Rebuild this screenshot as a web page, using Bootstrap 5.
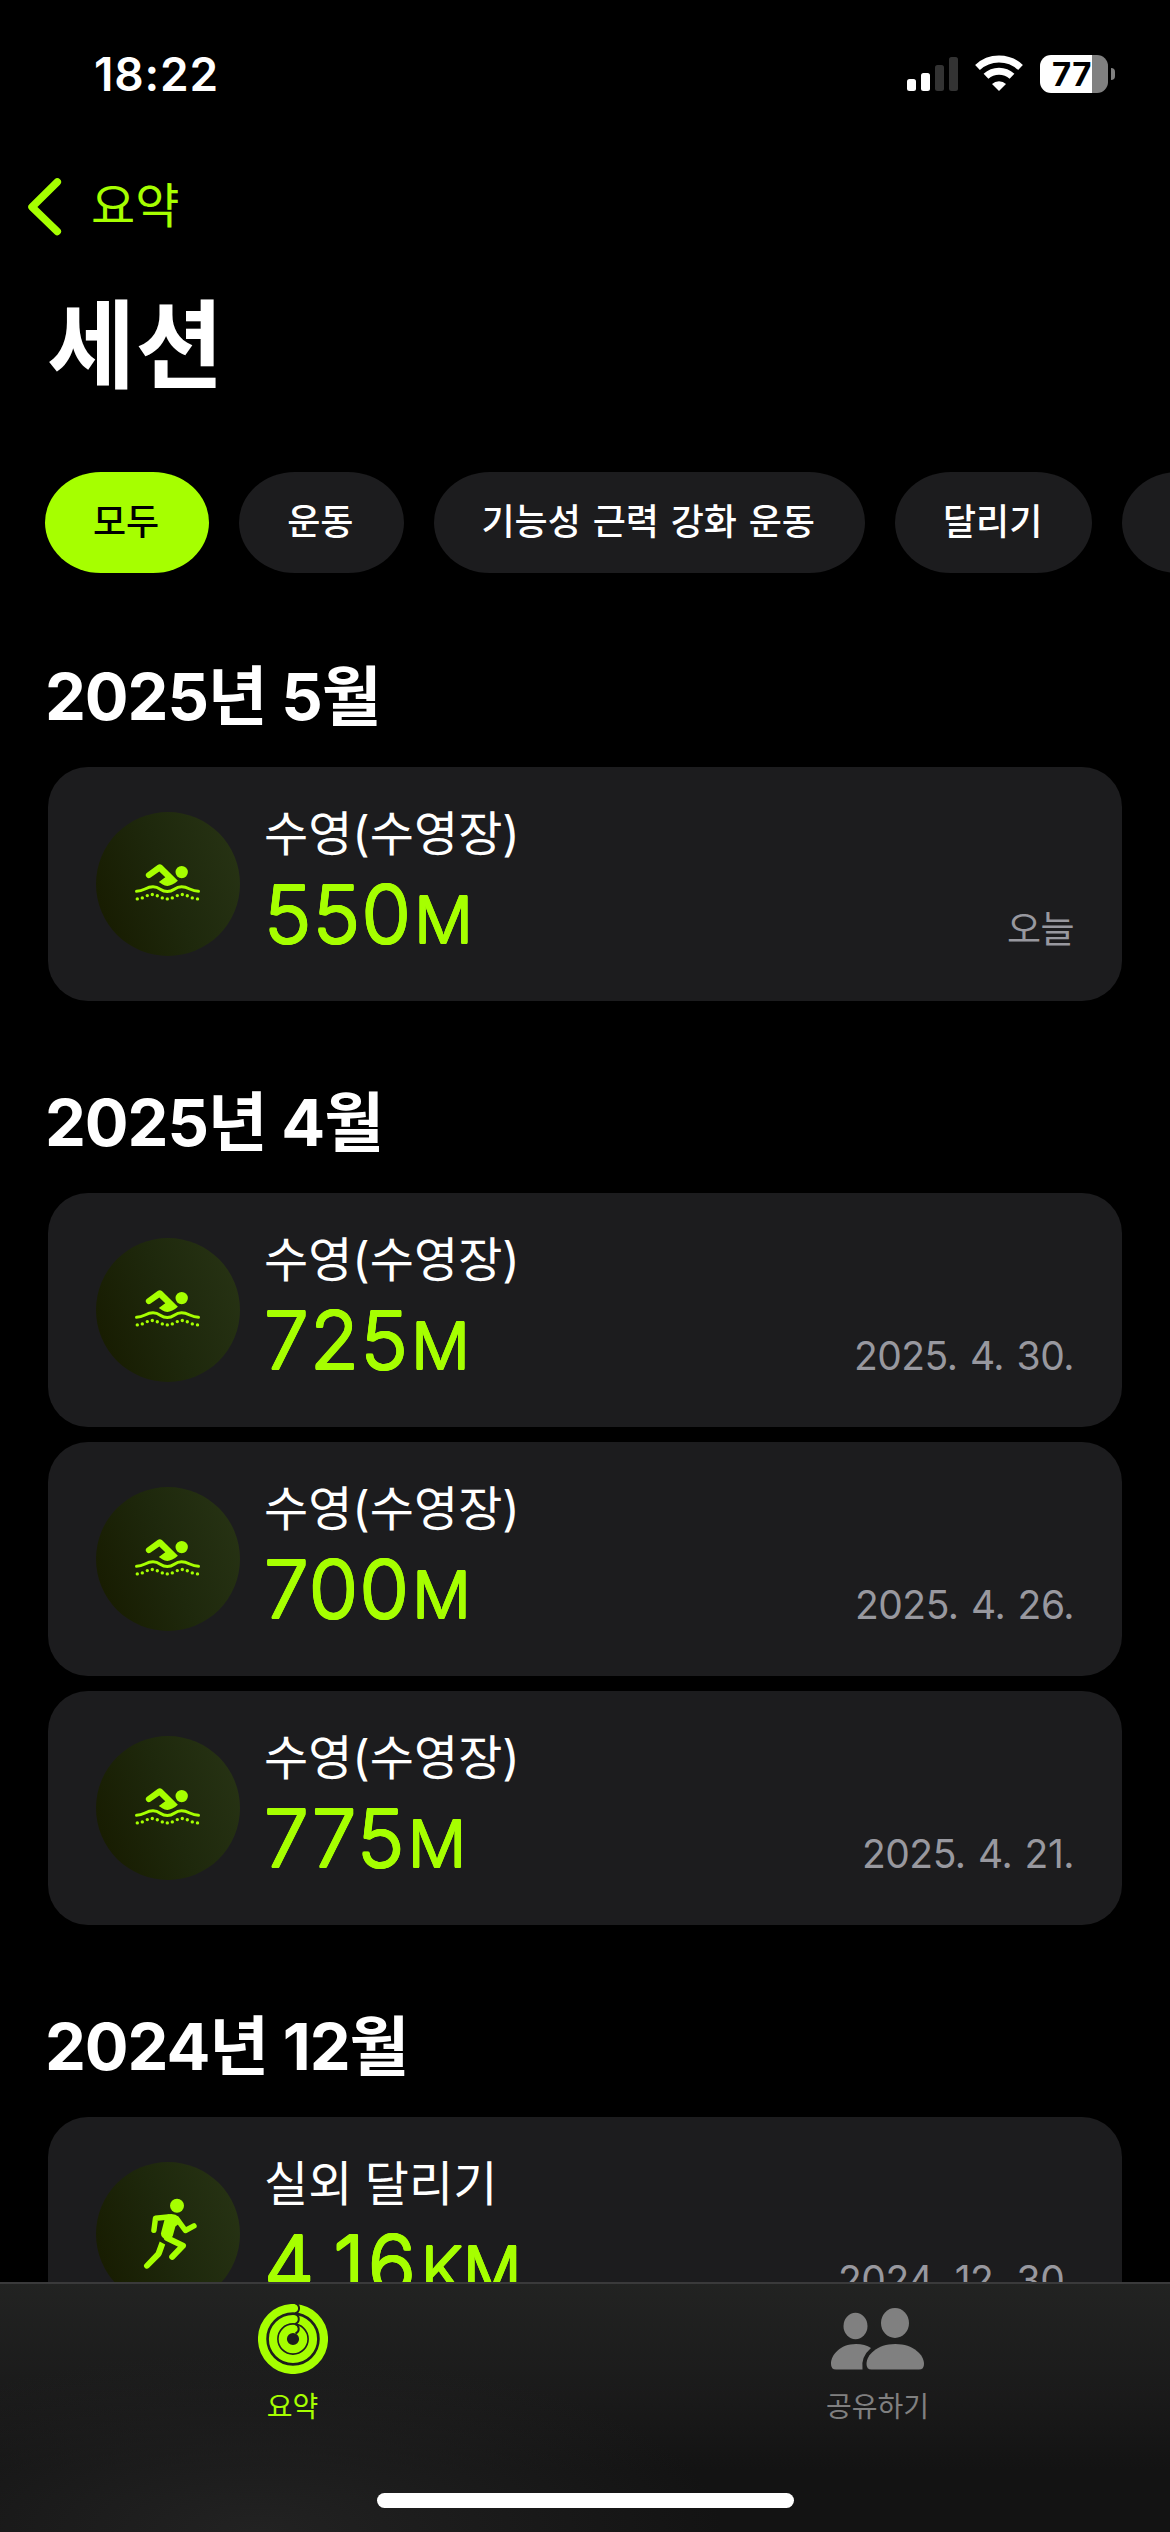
<!doctype html>
<html lang="ko" data-bs-theme="dark">
<head>
<meta charset="utf-8">
<meta name="viewport" content="width=device-width, initial-scale=1">
<title>세션</title>
<link href="https://cdn.jsdelivr.net/npm/bootstrap@5.3.0/dist/css/bootstrap.min.css" rel="stylesheet">
<style>
  :root { --lime: #a6ff00; --tile: #1c1c1e; }
  body { background: #000; color: #fff; font-family: Inter, "Noto Sans CJK KR", sans-serif; }
  .phone { width: 1170px; height: 2532px; }
  .screen { min-height: 0; }
  .text-lime, .tab.text-lime { color: var(--lime); }
  .status { height: 148px; padding: 0 55px 0 94px; }
  .clock { font-size: 46px; font-weight: 600; letter-spacing: .8px; }
  .status-icons { gap: 17px; }
  .battery { width: 75px; height: 38px; }
  .battery-body { width: 68px; height: 38px; border-radius: 11px; background: linear-gradient(90deg, #fff 52px, #808080 52px); }
  .battery-level { color: #000; font-size: 33px; font-weight: 700; line-height: 38px; padding-left: 12px; letter-spacing: .3px; }
  .battery-tip { width: 4px; height: 12px; margin-left: 3px; border-radius: 0 4px 4px 0; background: #808080; }
  .back { height: 60px; margin-top: 28px; padding-left: 26px; gap: 27px; font-size: 48px; line-height: 60px; }
  .page-title { font-size: 96px; font-weight: 700; line-height: 100px; margin: 59px 0 77px 47px; }
  .chips { gap: 30px; padding-left: 45px; }
  .chip { height: 101px; min-width: 164px; padding: 0 50px 0 48px; border: 0; border-radius: 56px / 50.5px; background: var(--tile); color: #fff; font-size: 36px; font-weight: 500; line-height: 101px; word-spacing: 2.2px; white-space: nowrap; flex: none; }
  .chip.on { background: var(--lime); color: #000; }
  .sessions { padding: 2px 48px 0; }
  .month { font-size: 65px; font-weight: 700; line-height: 60px; letter-spacing: -1.1px; word-spacing: .5px; margin: 92px 0 40px -3px; }
  .session-list { gap: 15px; }
  .session { height: 234px; padding: 45px 48px; border: 0; border-radius: 40px; background: var(--tile); color: #fff; }
  .disc { width: 144px; height: 144px; background: linear-gradient(70deg, #171b00 5%, #1e280c 50%, #273314 95%); flex: none; }
  .info { margin-left: 24px; }
  .kind { font-size: 48px; line-height: 44px; word-spacing: -1px; }
  .distance { font-size: 80px; font-weight: 300; line-height: 78px; letter-spacing: 1.3px; margin: 19px 0 0 0; color: var(--lime);
    text-shadow: 1px 0, -1px 0, 0 1px, 0 -1px, .7px .7px, -.7px .7px, .7px -.7px, -.7px -.7px; }
  .distance.run { letter-spacing: 3px; }
  .unit { font-size: 65px; line-height: 1; margin-left: 2px; letter-spacing: 0; }
  .day { font-size: 39px; line-height: 40px; letter-spacing: -.5px; word-spacing: 2px; color: #98989f; margin-bottom: 6px; }
  .day.today { font-size: 37px; }
  .tabs { height: 250px; border-top: 2px solid #3a3a3b;
    background: radial-gradient(620px 240px at 22% 100%, rgba(35,35,35,.95), rgba(35,35,35,0) 75%), linear-gradient(180deg, #222322, #1a1a1a 45%, #131313 75%); }
  .tab { padding-top: 20px; color: #808080; font-size: 28px; line-height: 30px; text-decoration: none; }
  .tab svg { margin-bottom: 18px; }
  .home-bar { width: 417px; height: 15px; margin-bottom: 24px; }
</style>
</head>
<body>
<svg class="d-none" aria-hidden="true">
  <symbol id="swim" viewBox="0 0 144 144"><g transform="translate(39 51.3)" fill="currentColor">
    <circle cx="46.7" cy="8.8" r="6.2"/>
    <path d="M22.6 1.6Q25 0 27.2 1.9L42.9 17.4Q40 20 37.3 21.3Q34.500 22.700 32.300 22.700Q29.500 22.500 27.700 21.300L23.800 18.800L30.300 14L24.300 8.300L15.700 14.300A3.100 3.100 0 0 1 11.700 9.600Z"/>
    <path d="M1.500 28C9.500 28 10.500 23.500 18 23.500S25 28.300 32.300 28.300S39 23.500 46.500 23.500S55.500 28 63.500 28" fill="none" stroke="currentColor" stroke-width="3" stroke-linecap="round"/>
    <path d="M2.300 35.600h0M7.300 34.600h0M12.300 32.300h0M17.300 31.200h0M22.300 32.500h0M27.300 34.600h0M32.300 35.600h0M37.300 34.600h0M42.300 32.300h0M47.300 31.200h0M52.300 32.500h0M57.300 34.600h0M62.500 35.600h0" fill="none" stroke="currentColor" stroke-width="3.400" stroke-linecap="round"/>
  </g></symbol>
  <symbol id="run" viewBox="0 0 144 144"><g fill="none" stroke="currentColor" stroke-width="5.400" stroke-linecap="round" stroke-linejoin="round">
    <circle cx="81" cy="43.700" r="7" fill="currentColor" stroke="none"/>
    <path d="M57.900 68.300L59.500 56.200L72 55"/>
    <path d="M81 57L89.400 68.500L98 63.900"/>
    <path d="M68.700 57L72 52.300Q79 51 82.500 54.700L85 60L79.400 64.500L76.700 74.300L72 78.500Q65 76 64.900 71.500Z" fill="currentColor" stroke="none"/>
    <path d="M71 76L87 83.700L76.200 94.800" stroke-width="6"/>
    <path d="M63.700 79.500L69.200 82.500L66 91.500Q65.500 93 64.500 94.200L53 105.700A2.800 2.800 0 0 1 48.700 102L59.800 90.300Z" fill="currentColor" stroke="none"/>
  </g></symbol>
</svg>

<div class="phone d-flex flex-column overflow-hidden">
  <main class="screen flex-grow-1 overflow-hidden">
    <header class="status d-flex justify-content-between align-items-center">
      <div class="clock">18:22</div>
      <div class="status-icons d-flex align-items-center">
        <svg width="51" height="38" viewBox="0 0 51 38"><g fill="#fff"><rect y="24" width="9" height="12" rx="2.500"/><rect x="14" y="18" width="9" height="18" rx="2.500"/></g><g fill="#333"><rect x="28" y="10" width="9" height="26" rx="2.500"/><rect x="42" y="2" width="9" height="34" rx="2.500"/></g></svg>
        <svg width="48" height="38" viewBox="0 0 48 38"><g fill="none" stroke="#fff" stroke-width="7"><path d="M2.500 12.500A31.500 31.500 0 0 1 45.500 12.500"/><path d="M11 21.300A19 19 0 0 1 37 21.300"/></g><path d="M24 36L17 29A10 10 0 0 1 31 29Z" fill="#fff"/></svg>
        <div class="battery d-flex align-items-center"><div class="battery-body"><div class="battery-level">77</div></div><div class="battery-tip"></div></div>
      </div>
    </header>

    <nav class="back d-flex align-items-center text-lime">
      <svg width="38" height="60" viewBox="0 0 38 60"><path d="M31.300 6L6 31L31.300 55.500" fill="none" stroke="currentColor" stroke-width="7.500" stroke-linecap="round" stroke-linejoin="round"/></svg>
      <span>요약</span>
    </nav>

    <h1 class="page-title">세션</h1>

    <div class="chips d-flex">
      <button class="chip on">모두</button>
      <button class="chip">운동</button>
      <button class="chip">기능성 근력 강화 운동</button>
      <button class="chip">달리기</button>
      <button class="chip"></button>
    </div>

    <div class="sessions">
      <h2 class="month">2025년 5월</h2>
      <div class="session card flex-row">
        <div class="disc rounded-circle text-lime"><svg width="144" height="144"><use href="#swim"/></svg></div>
        <div class="info flex-grow-1"><div class="kind">수영(수영장)</div><div class="distance">550<span class="unit">M</span></div></div>
        <div class="day today align-self-end">오늘</div>
      </div>

      <h2 class="month">2025년 4월</h2>
      <div class="session-list d-grid">
        <div class="session card flex-row">
          <div class="disc rounded-circle text-lime"><svg width="144" height="144"><use href="#swim"/></svg></div>
          <div class="info flex-grow-1"><div class="kind">수영(수영장)</div><div class="distance">725<span class="unit">M</span></div></div>
          <div class="day align-self-end">2025. 4. 30.</div>
        </div>
        <div class="session card flex-row">
          <div class="disc rounded-circle text-lime"><svg width="144" height="144"><use href="#swim"/></svg></div>
          <div class="info flex-grow-1"><div class="kind">수영(수영장)</div><div class="distance">700<span class="unit">M</span></div></div>
          <div class="day align-self-end">2025. 4. 26.</div>
        </div>
        <div class="session card flex-row">
          <div class="disc rounded-circle text-lime"><svg width="144" height="144"><use href="#swim"/></svg></div>
          <div class="info flex-grow-1"><div class="kind">수영(수영장)</div><div class="distance">775<span class="unit">M</span></div></div>
          <div class="day align-self-end">2025. 4. 21.</div>
        </div>
      </div>

      <h2 class="month">2024년 12월</h2>
      <div class="session card flex-row">
        <div class="disc rounded-circle text-lime"><svg width="144" height="144"><use href="#run"/></svg></div>
        <div class="info flex-grow-1"><div class="kind">실외 달리기</div><div class="distance run">4.16<span class="unit">KM</span></div></div>
        <div class="day align-self-end">2024. 12. 30.</div>
      </div>
    </div>
  </main>

  <footer class="tabs d-flex flex-column justify-content-between align-items-center flex-shrink-0">
    <nav class="d-flex w-100">
      <a class="tab w-50 d-flex flex-column align-items-center text-lime" href="#">
        <svg width="70" height="70" viewBox="0 0 70 70"><g fill="none" stroke="currentColor"><circle cx="35" cy="35" r="30.900" stroke-width="8.300"/><circle cx="35" cy="35" r="20" stroke-width="8.200"/><circle cx="35" cy="35" r="10.200" stroke-width="8.200"/></g><path d="M37 -.8A5.300 5.300 0 0 1 37 9.500M37 10A5.200 5.200 0 0 1 37 20M37 20A5 5 0 0 1 37.500 29.500" fill="none" stroke="#1e1f1e" stroke-width="2"/></svg>
        <span>요약</span>
      </a>
      <a class="tab w-50 d-flex flex-column align-items-center" href="#">
        <svg width="94" height="70" viewBox="0 0 94 70" fill="currentColor"><ellipse cx="24.500" cy="22" rx="12" ry="13.200"/><ellipse cx="64" cy="19" rx="14" ry="15"/><path d="M35.500 60C35.500 51 46 40 64.300 40S93 51 93 60Q93 65.500 88 65.500H40.500Q35.500 65.500 35.500 60Z"/><path d="M0 60C0 51 9 40 25 40Q34 40 40 44Q29.500 53 31.500 65.500H5Q0 65.500 0 60Z"/></svg>
        <span>공유하기</span>
      </a>
    </nav>
    <div class="home-bar bg-white rounded-pill"></div>
  </footer>
</div>
<script src="https://cdn.jsdelivr.net/npm/bootstrap@5.3.0/dist/js/bootstrap.bundle.min.js"></script>
</body>
</html>
